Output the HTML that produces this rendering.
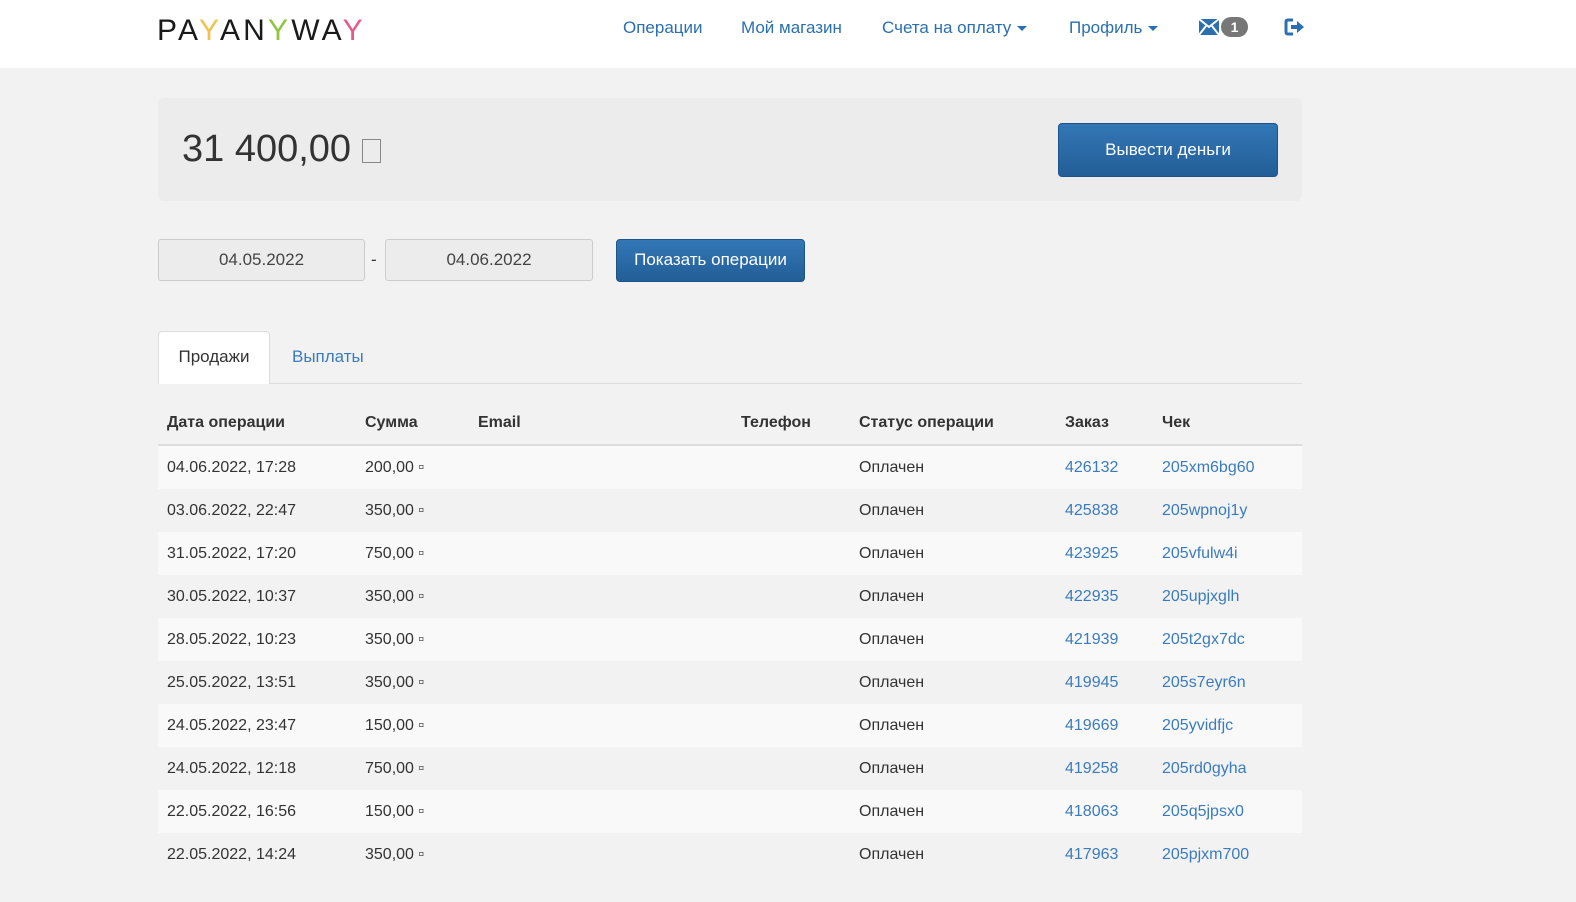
<!DOCTYPE html>
<html><head><meta charset="utf-8"><style>
*{margin:0;padding:0;box-sizing:border-box}
body{width:1576px;height:902px;background:#f2f2f2;font-family:"Liberation Sans",Arial,sans-serif;color:#333;position:relative;overflow:hidden}
.hdr{position:absolute;left:0;top:0;width:1576px;height:68px;background:#fff}
.logo{position:absolute;left:157px;top:14px;font-size:30px;letter-spacing:3.2px;color:#1a1a1a;font-weight:400}
.nav{position:absolute;top:18px;font-size:17px;color:#2a6fb0}
.caret{display:inline-block;width:0;height:0;border-left:5px solid transparent;border-right:5px solid transparent;border-top:5px solid #2a6fb0;vertical-align:middle;margin-left:6px}
.abs{position:absolute}
.bal{left:158px;top:98px;width:1144px;height:103px;background:#ececec;border-radius:6px}
.btn{background:linear-gradient(#3377b6,#225e97);color:#fff;border:1px solid #1d5487;border-radius:4px;text-align:center}
.inp{background:#ececec;border:1px solid #ccc;border-radius:3px;text-align:center;font-size:17px;color:#444;line-height:40px;height:42px}
.row{position:absolute;left:158px;width:1144px;height:43px;font-size:16px;line-height:43px}
.row span{position:absolute}
.a{color:#3a7bbf}
</style></head><body>
<div class="hdr"></div>
<div class="logo">PA<span style="color:#f2c14e">Y</span>AN<span style="color:#8cc63f">Y</span>WA<span style="color:#e8588b">Y</span></div>
<div class="nav" style="left:623px">Операции</div>
<div class="nav" style="left:741px">Мой магазин</div>
<div class="nav" style="left:882px">Счета на оплату<span class="caret"></span></div>
<div class="nav" style="left:1069px">Профиль<span class="caret"></span></div>
<svg class="abs" style="left:1199px;top:19px" width="20" height="16" viewBox="0 0 20 16"><rect width="20" height="16" fill="#2a6fb0"/><path d="M0 0L10 8L20 0M0 16L7 7M20 16L13 7" stroke="#fff" stroke-width="2" fill="none"/></svg>
<div class="abs" style="left:1221px;top:17px;width:27px;height:20px;border-radius:10px;background:#777;color:#fff;font-weight:bold;font-size:14px;text-align:center;line-height:20px">1</div>
<svg class="abs" style="left:1284px;top:18px" width="21" height="18" viewBox="0 0 21 18"><path d="M9 2H4Q2 2 2 4V14Q2 16 4 16H9" stroke="#2a6fb0" stroke-width="3" fill="none"/><path d="M7 7H13V3L20 9L13 15V11H7Z" fill="#2a6fb0"/></svg>

<div class="abs bal"></div>
<div class="abs" style="left:182px;top:128px;font-size:38px;color:#333">31 400,00 <span style="display:inline-block;width:19px;height:24px;border:1.5px solid #888;vertical-align:-2px"></span></div>
<div class="abs btn" style="left:1058px;top:123px;width:220px;height:54px;line-height:52px;font-size:17px">Вывести деньги</div>

<div class="abs inp" style="left:158px;top:239px;width:207px">04.05.2022</div>
<div class="abs" style="left:371px;top:250px;font-size:17px">-</div>
<div class="abs inp" style="left:385px;top:239px;width:208px">04.06.2022</div>
<div class="abs btn" style="left:616px;top:239px;width:189px;height:43px;line-height:40px;font-size:17px">Показать операции</div>

<div class="abs" style="left:158px;top:383px;width:1144px;height:1px;background:#ddd"></div>
<div class="abs" style="left:158px;top:331px;width:112px;height:53px;background:#fff;border:1px solid #ddd;border-bottom:none;border-radius:4px 4px 0 0;font-size:17px;line-height:50px;text-align:center">Продажи</div>
<div class="abs a" style="left:292px;top:347px;font-size:17px">Выплаты</div>

<div class="row" style="top:401px;font-weight:bold"><span style="left:9px">Дата операции</span><span style="left:207px">Сумма</span><span style="left:320px">Email</span><span style="left:583px">Телефон</span><span style="left:701px">Статус операции</span><span style="left:907px">Заказ</span><span style="left:1004px">Чек</span></div>
<div class="abs" style="left:158px;top:444px;width:1144px;height:2px;background:#ddd"></div>

<div class="row" style="top:446px;background:#f9f9f9"><span style="left:9px">04.06.2022, 17:28</span><span style="left:207px">200,00 ▫</span><span style="left:701px">Оплачен</span><span class="a" style="left:907px">426132</span><span class="a" style="left:1004px">205xm6bg60</span></div>
<div class="row" style="top:489px"><span style="left:9px">03.06.2022, 22:47</span><span style="left:207px">350,00 ▫</span><span style="left:701px">Оплачен</span><span class="a" style="left:907px">425838</span><span class="a" style="left:1004px">205wpnoj1y</span></div>
<div class="row" style="top:532px;background:#f9f9f9"><span style="left:9px">31.05.2022, 17:20</span><span style="left:207px">750,00 ▫</span><span style="left:701px">Оплачен</span><span class="a" style="left:907px">423925</span><span class="a" style="left:1004px">205vfulw4i</span></div>
<div class="row" style="top:575px"><span style="left:9px">30.05.2022, 10:37</span><span style="left:207px">350,00 ▫</span><span style="left:701px">Оплачен</span><span class="a" style="left:907px">422935</span><span class="a" style="left:1004px">205upjxglh</span></div>
<div class="row" style="top:618px;background:#f9f9f9"><span style="left:9px">28.05.2022, 10:23</span><span style="left:207px">350,00 ▫</span><span style="left:701px">Оплачен</span><span class="a" style="left:907px">421939</span><span class="a" style="left:1004px">205t2gx7dc</span></div>
<div class="row" style="top:661px"><span style="left:9px">25.05.2022, 13:51</span><span style="left:207px">350,00 ▫</span><span style="left:701px">Оплачен</span><span class="a" style="left:907px">419945</span><span class="a" style="left:1004px">205s7eyr6n</span></div>
<div class="row" style="top:704px;background:#f9f9f9"><span style="left:9px">24.05.2022, 23:47</span><span style="left:207px">150,00 ▫</span><span style="left:701px">Оплачен</span><span class="a" style="left:907px">419669</span><span class="a" style="left:1004px">205yvidfjc</span></div>
<div class="row" style="top:747px"><span style="left:9px">24.05.2022, 12:18</span><span style="left:207px">750,00 ▫</span><span style="left:701px">Оплачен</span><span class="a" style="left:907px">419258</span><span class="a" style="left:1004px">205rd0gyha</span></div>
<div class="row" style="top:790px;background:#f9f9f9"><span style="left:9px">22.05.2022, 16:56</span><span style="left:207px">150,00 ▫</span><span style="left:701px">Оплачен</span><span class="a" style="left:907px">418063</span><span class="a" style="left:1004px">205q5jpsx0</span></div>
<div class="row" style="top:833px"><span style="left:9px">22.05.2022, 14:24</span><span style="left:207px">350,00 ▫</span><span style="left:701px">Оплачен</span><span class="a" style="left:907px">417963</span><span class="a" style="left:1004px">205pjxm700</span></div>
</body></html>
